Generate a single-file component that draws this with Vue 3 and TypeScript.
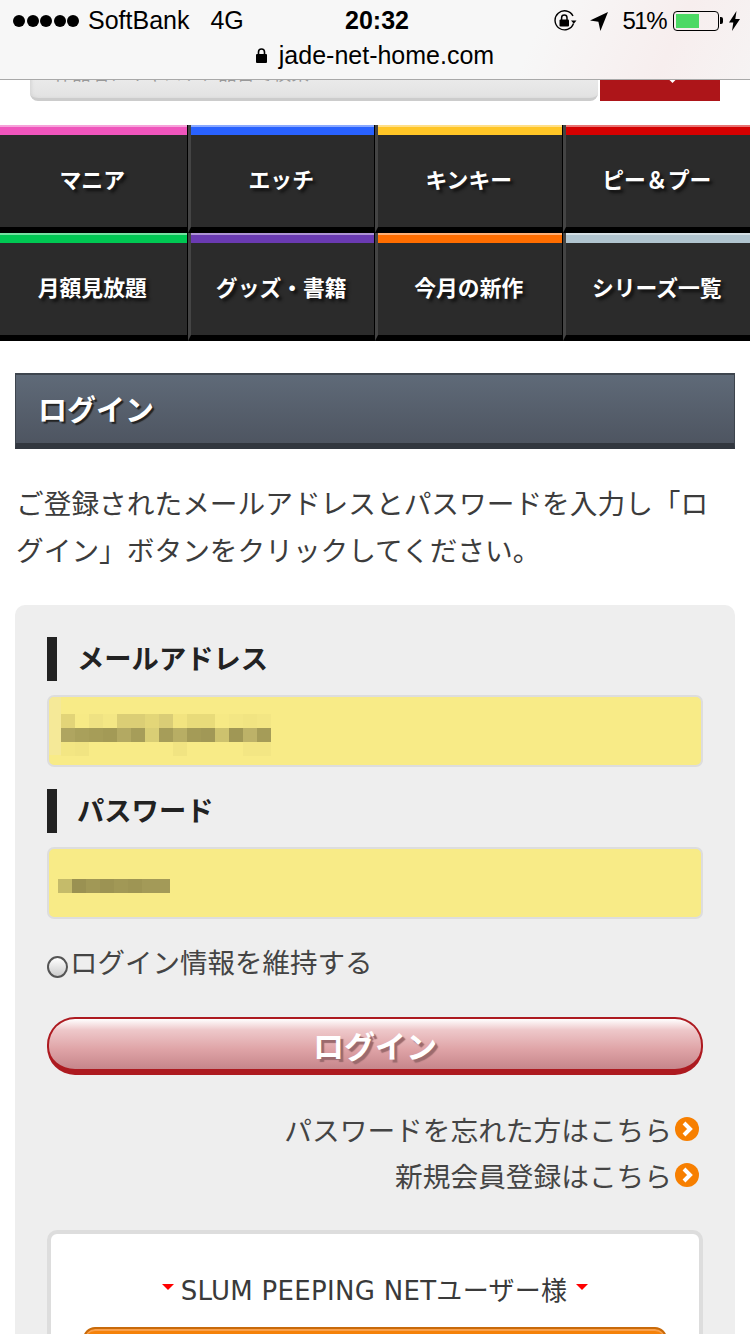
<script setup lang="ts">
interface NavItem {
  label: string;
  color: string;
}

const navItems: NavItem[] = [
  { label: 'マニア', color: '#ef55bc' },
  { label: 'エッチ', color: '#2962ff' },
  { label: 'キンキー', color: '#ffc526' },
  { label: 'ピー＆プー', color: '#d50000' },
  { label: '月額見放題', color: '#00c853' },
  { label: 'グッズ・書籍', color: '#6a3ab2' },
  { label: '今月の新作', color: '#ff6d00' },
  { label: 'シリーズ一覧', color: '#b0c4cf' },
];

// masked values in the two autofilled fields
const mailMask: string[][] = [
  ['#e2d478', '#f7ea86', '#efe283', '#f4e785', '#dbce75', '#dbce75', '#e3d678', '#dacd76', '#f2e480', '#e8db7a', '#e8db7a', '#f6e985', '#f3e684', '#f1e482', '#f3e684'],
  ['#afa560', '#a9a05b', '#a69d58', '#a39a56', '#b3a962', '#a69d59', '#d9ce75', '#a69d59', '#b8ae64', '#a49b57', '#a19856', '#cdc26e', '#a09755', '#bdb268', '#a59c58'],
  ['#f3e683', '#f1e482', '', '', '', '', '', '', '#f1e482', '', '', '', '', '#f3e684', '#f3e684'],
];
const passMask: string[][] = [
  ['#c5bb6a', '#9a9152', '#a19856', '#9c9353', '#a19856', '#9e9554', '#a39a58', '#a39a58'],
];
</script>

<template>
  <div class="screen">
    <header class="browser-bar">
      <div class="status">
        <div class="status-left">
          <span class="dots"><i v-for="n in 5" :key="n"></i></span>
          <span class="carrier">SoftBank</span>
          <span class="net">4G</span>
        </div>
        <span class="clock">20:32</span>
        <div class="status-right">
          <svg class="ic-rotate" width="23" height="22" viewBox="0 0 23 22">
            <path d="M19.5 13.5A9.5 9.5 0 1 1 19 6" fill="none" stroke="#000" stroke-width="1.4" />
            <path d="M17 10.5h5.5l-2.7 3.2z" fill="#000" />
            <rect x="5.5" y="9.5" width="9.5" height="7" rx="1" fill="#000" />
            <path d="M7.6 10V7.8a2.7 2.7 0 0 1 5.4 0V10" fill="none" stroke="#000" stroke-width="1.5" />
          </svg>
          <svg class="ic-arrow" width="18" height="20" viewBox="0 0 18 20">
            <path d="M18 1 0 9.6l8.4 1.2L10.4 20z" fill="#000" />
          </svg>
          <span class="percent">51%</span>
          <span class="battery"><i></i></span>
          <span class="nub"></span>
          <svg class="ic-bolt" width="11" height="20" viewBox="0 0 11 20">
            <path d="M7.5 0 0 11.5h4.3L3 20l8-12H6.3z" fill="#000" />
          </svg>
        </div>
      </div>
      <div class="address">
        <svg width="11" height="15" viewBox="0 0 11 15">
          <rect y="6" width="11" height="9" rx="1" fill="#000" />
          <path d="M2.5 7V4a3 3 0 0 1 6 0v3" fill="none" stroke="#000" stroke-width="1.6" />
        </svg>
        <span>jade-net-home.com</span>
      </div>
    </header>

    <div class="search">
      <div class="search-input">作品名、キャスト、品番で検索</div>
      <div class="search-btn"><i></i></div>
    </div>

    <nav class="nav">
      <a v-for="item in navItems" :key="item.label" class="nav-cell">
        <span class="nav-stripe" :style="{ backgroundColor: item.color }"></span>
        <span class="nav-label">{{ item.label }}</span>
      </a>
    </nav>

    <main class="content">
      <h1 class="page-title">ログイン</h1>
      <p class="lead">ご登録されたメールアドレスとパスワードを入力し「ログイン」ボタンをクリックしてください。</p>

      <section class="panel">
        <h2 class="field-label">メールアドレス</h2>
        <div class="field field-mail">
          <span class="autofill-edge"></span>
          <div class="mask">
            <div v-for="(row, r) in mailMask" :key="r" class="mask-row">
              <i v-for="(c, i) in row" :key="i" :style="{ backgroundColor: c || 'transparent' }"></i>
            </div>
          </div>
        </div>

        <h2 class="field-label second">パスワード</h2>
        <div class="field field-pass">
          <div class="mask">
            <div v-for="(row, r) in passMask" :key="r" class="mask-row">
              <i v-for="(c, i) in row" :key="i" :style="{ backgroundColor: c }"></i>
            </div>
          </div>
        </div>

        <label class="remember"><span class="radio"></span>ログイン情報を維持する</label>

        <button class="login-btn" type="button">ログイン</button>

        <div class="links">
          <a class="link">パスワードを忘れた方はこちら<svg width="24" height="24" viewBox="0 0 24 24"><circle cx="12" cy="12" r="12" fill="#f77f00" /><path d="M9 6l6 6-6 6" fill="none" stroke="#fff" stroke-width="4" /></svg></a>
          <a class="link">新規会員登録はこちら<svg width="24" height="24" viewBox="0 0 24 24"><circle cx="12" cy="12" r="12" fill="#f77f00" /><path d="M9 6l6 6-6 6" fill="none" stroke="#fff" stroke-width="4" /></svg></a>
        </div>

        <div class="user-box">
          <p class="user-title"><i class="tri"></i><span>SLUM PEEPING NETユーザー様</span><i class="tri"></i></p>
          <div class="orange-btn"></div>
        </div>
      </section>
    </main>
  </div>
</template>

<style>
html,
body {
  margin: 0;
  background: #fff;
  overflow: hidden;
}
</style>

<style scoped>
.screen {
  position: relative;
  width: 750px;
  height: 1334px;
  overflow: hidden;
  background: #fff;
  font-family: "Noto Sans CJK JP", "Liberation Sans", sans-serif;
  color: #333;
}

.browser-bar {
  position: absolute;
  top: 0;
  left: 0;
  right: 0;
  height: 79px;
  z-index: 2;
  background: linear-gradient(115deg, #f7f7f7 70%, #f7eeee 88%, #f6f3f3 100%);
  border-bottom: 1px solid #a9a9a9;
  font-family: "Liberation Sans", sans-serif;
  color: #000;
}

.status {
  position: relative;
  display: flex;
  justify-content: space-between;
  align-items: center;
  height: 41px;
  padding: 0 10px 0 13px;
  font-size: 25px;
}

.status-left,
.status-right {
  display: flex;
  align-items: center;
}

.dots {
  display: flex;
  gap: 1.5px;
  margin-right: 9px;
}

.dots i {
  width: 12px;
  height: 12px;
  border-radius: 50%;
  background: #000;
}

.net {
  margin-left: 21px;
}

.clock {
  position: absolute;
  left: 345px;
  font-weight: 700;
}

.ic-rotate {
  margin-right: 13px;
}

.ic-arrow {
  margin-right: 14px;
}

.percent {
  margin-right: 7px;
  font-size: 24px;
  letter-spacing: -1.5px;
}

.battery {
  box-sizing: border-box;
  display: block;
  width: 46px;
  height: 20px;
  padding: 2px;
  border: 1px solid #000;
  border-radius: 4px;
}

.battery i {
  display: block;
  width: 23px;
  height: 100%;
  background: #4cd964;
}

.nub {
  width: 3px;
  height: 7px;
  margin-left: 1px;
  margin-right: 6px;
  background: #000;
  border-radius: 0 2px 2px 0;
}

.address {
  display: flex;
  justify-content: center;
  align-items: center;
  gap: 12px;
  height: 28px;
  font-size: 25px;
}

.search {
  display: flex;
  gap: 2px;
  padding: 41px 30px 0;
  height: 60px;
}

.search-input {
  box-sizing: border-box;
  width: 568px;
  height: 60px;
  padding: 19px 24px 0;
  background: linear-gradient(#f1f1f1 40%, #e2e2e2);
  border-bottom: 3px solid #ccc;
  border-radius: 8px;
  box-shadow: inset 2px 0 3px #d8d8d8;
  font-size: 18.3px;
  line-height: 24px;
  color: #999;
}

.search-btn {
  position: relative;
  width: 120px;
  height: 60px;
  background: #ad1519;
}

.search-btn i {
  position: absolute;
  left: 70px;
  top: 36px;
  width: 5px;
  height: 5px;
  background: #fff;
  transform: rotate(45deg);
}

.nav {
  display: grid;
  grid-template-columns: repeat(4, 187.5px);
  margin-top: 24px;
}

.nav-cell {
  box-sizing: border-box;
  display: flex;
  flex-direction: column;
  height: 108px;
  background: #2b2b2b;
  border-bottom: 6px solid #000;
  border-left: 3px solid #444;
  border-right: 1px solid #000;
}

.nav-cell:nth-child(4n + 1) {
  border-left: 0;
}

.nav-cell:nth-child(4n) {
  border-right: 0;
}

.nav-stripe {
  flex: none;
  height: 10px;
  background-image: linear-gradient(rgba(255, 255, 255, 0.45) 2px, transparent 2px);
}

.nav-label {
  flex: 1;
  display: flex;
  justify-content: center;
  align-items: center;
  padding: 0 2px 5px 0;
  font-size: 21.8px;
  font-weight: 700;
  color: #fff;
  text-shadow: 3px 3px 3px #111;
}

.content {
  padding: 32px 15px 0;
}

.page-title {
  box-sizing: border-box;
  height: 76px;
  margin: 0;
  padding-left: 22px;
  background: linear-gradient(#5f6a78, #4e5561);
  border: 1px solid #3e454e;
  border-top-width: 2px;
  border-bottom: 6px solid #32373f;
  font-size: 29px;
  font-weight: 700;
  line-height: 66px;
  color: #fff;
  text-shadow: 2px 2px 1px #222;
}

.lead {
  margin: 30px 0 32px;
  padding-left: 1px;
  font-size: 27.7px;
  line-height: 47px;
  color: #3c3c3c;
}

.panel {
  padding: 32px 32px 0;
  height: 800px;
  background: #eee;
  border-radius: 10px;
}

.field-label {
  height: 44px;
  margin: 0 0 14px;
  padding-left: 20px;
  border-left: 10px solid #222;
  font-size: 27.3px;
  font-weight: 700;
  line-height: 40px;
  color: #222;
}

.field-label.second {
  margin-top: 22px;
}

.field {
  position: relative;
  box-sizing: border-box;
  height: 72px;
  background: #f8eb87;
  border: 2px solid #ddd;
  border-radius: 7px;
  overflow: hidden;
}

.autofill-edge {
  position: absolute;
  left: 0;
  top: 0;
  width: 12px;
  height: 58px;
  background: #f5e998;
}

.mask {
  position: absolute;
}

.field-mail .mask {
  left: 12px;
  top: 17px;
}

.field-pass .mask {
  left: 9px;
  top: 30px;
}

.mask-row {
  display: flex;
}

.mask-row i {
  width: 14px;
  height: 14px;
}

.remember {
  display: flex;
  align-items: center;
  height: 36px;
  margin-top: 24px;
  padding-bottom: 4px;
  font-size: 27.5px;
  color: #444;
}

.radio {
  box-sizing: border-box;
  flex: none;
  width: 21px;
  height: 22px;
  margin: 11px 2px 0 0;
  border: 2px solid #555;
  border-radius: 50%;
  background: linear-gradient(#fff, #ccc);
}

.login-btn {
  display: block;
  box-sizing: border-box;
  width: 100%;
  height: 58px;
  margin-top: 34px;
  padding: 0;
  background: linear-gradient(#fff 0, #eec8ca 22%, #dfa4a7 60%, #c6868b);
  border: 2px solid #ad1a20;
  border-bottom-width: 6px;
  border-radius: 28px;
  font-family: inherit;
  font-size: 31px;
  font-weight: 700;
  line-height: 45px;
  color: #fff;
  text-shadow: 3px 3px 1px #9b6a6d;
}

.links {
  display: flex;
  flex-direction: column;
  align-items: flex-end;
  gap: 6px;
  margin-top: 34px;
  padding-right: 4px;
}

.link {
  display: flex;
  align-items: center;
  height: 40px;
  font-size: 27.7px;
  color: #444;
}

.link svg {
  margin-left: 3px;
}

.user-box {
  box-sizing: border-box;
  height: 300px;
  margin-top: 35px;
  padding: 32px 32px 0;
  background: #fff;
  border: 4px solid #ddd;
  border-radius: 10px;
}

.user-title {
  display: flex;
  justify-content: center;
  align-items: center;
  height: 44px;
  margin: 0;
  font-family: "DejaVu Sans", "Noto Sans CJK JP", sans-serif;
  font-size: 26px;
  letter-spacing: 0.3px;
  color: #3a3a3a;
}

.user-title span {
  margin: 0 9px 0 7px;
}

.tri {
  width: 0;
  height: 0;
  margin-top: -2px;
  border: 6px solid transparent;
  border-top: 6px solid #f00;
  border-bottom: 0;
}

.orange-btn {
  box-sizing: border-box;
  height: 60px;
  margin-top: 17px;
  background: #f5820a;
  border: 2px solid #c86a0a;
  border-radius: 12px;
  box-shadow: inset 0 2px 0 #f9a04c;
}
</style>
